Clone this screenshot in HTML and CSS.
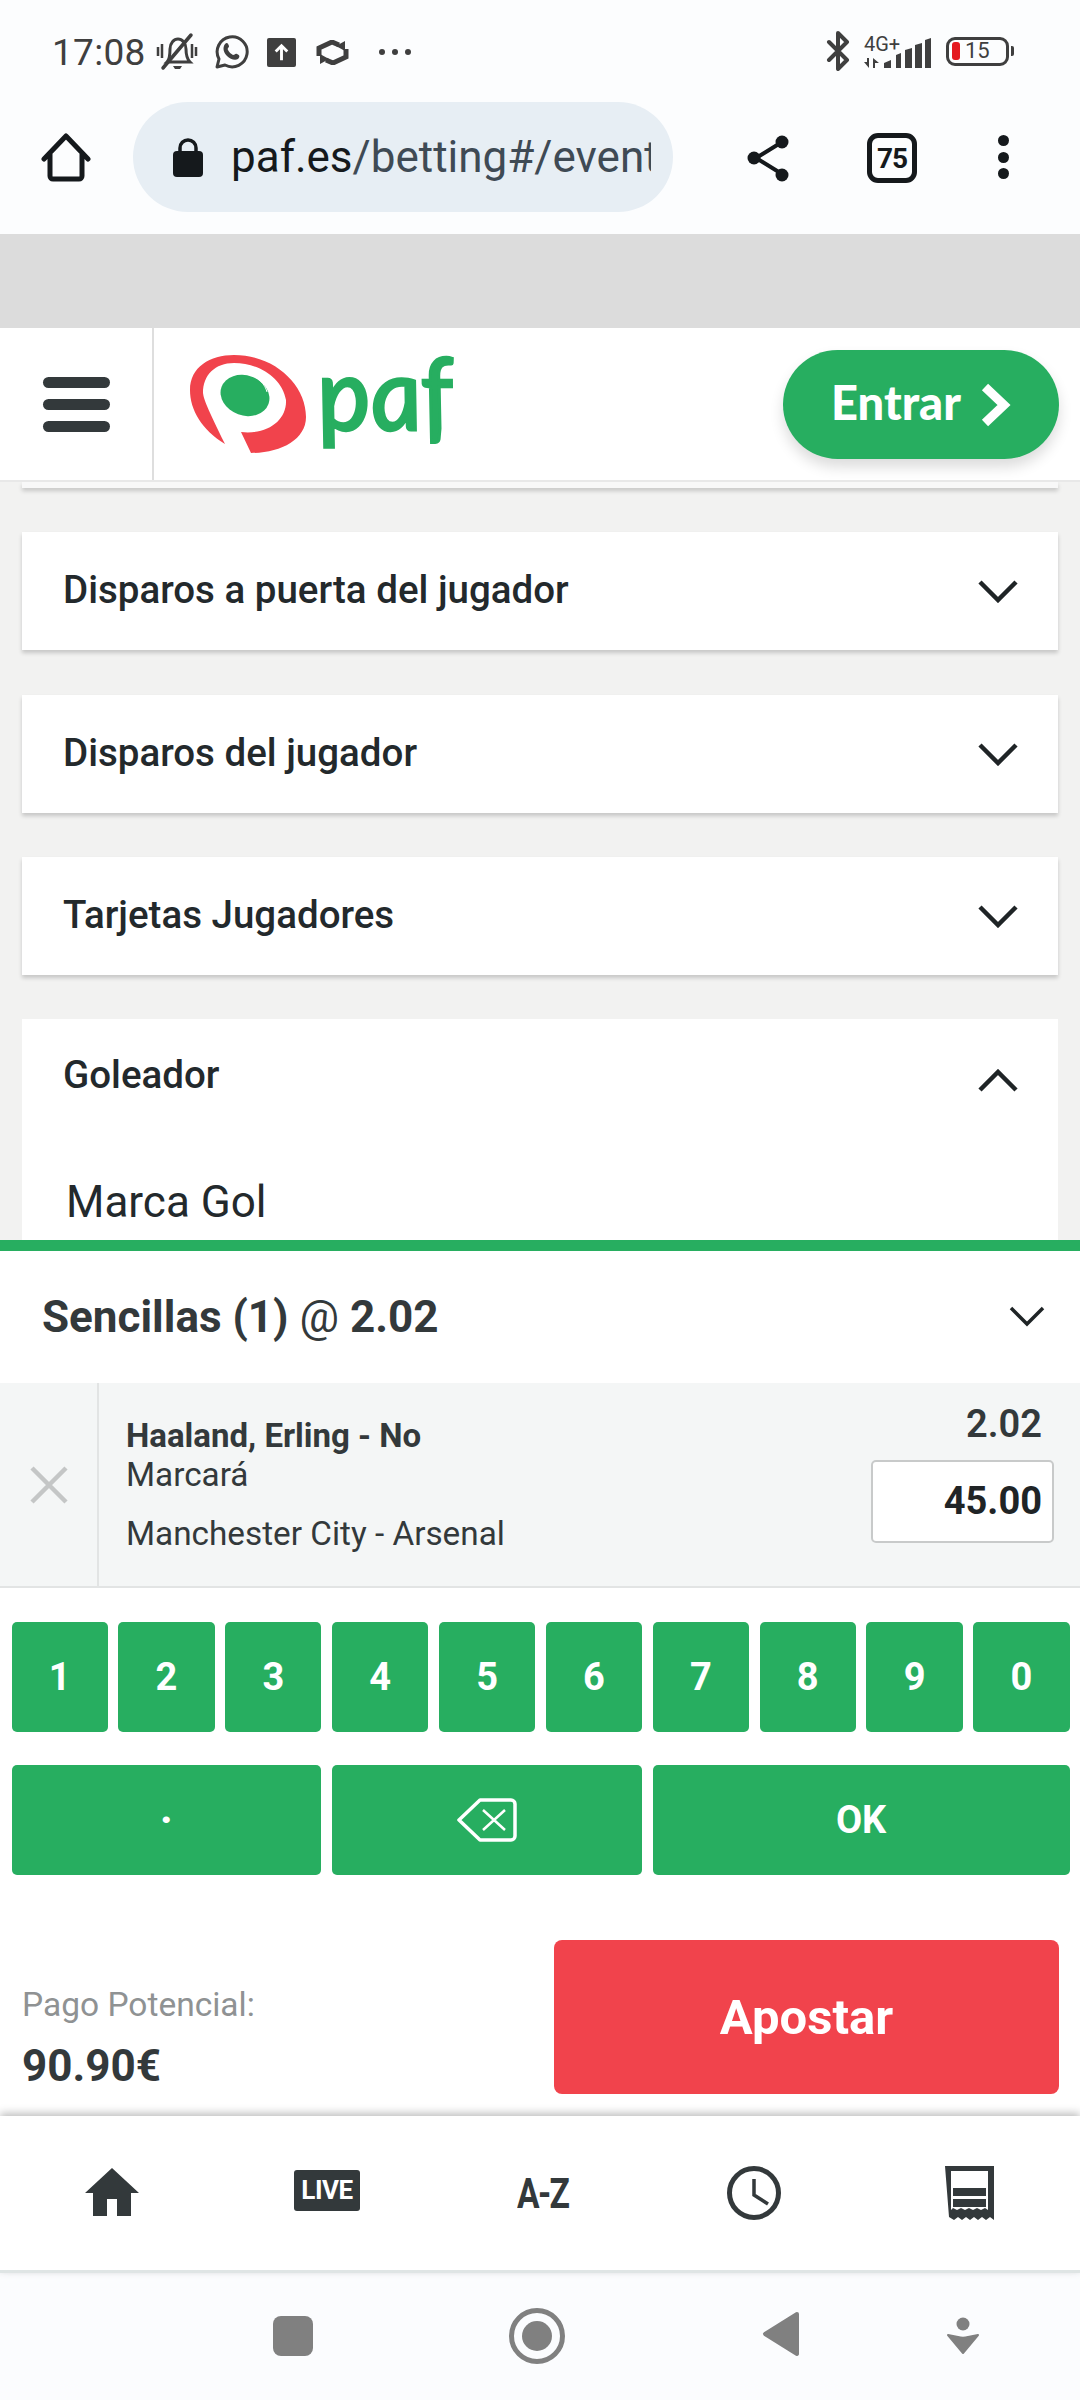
FILE: index.html
```html
<!DOCTYPE html>
<html lang="es">
<head>
<meta charset="utf-8">
<title>paf.es betting</title>
<link rel="stylesheet" href="styles.css">
</head>
<body>
<div class="phone">
  <div class="status">
    <div class="status-left">
      <span class="clock">17:08</span>
      <svg class="si mute" viewBox="0 0 44 40"><g fill="none" stroke="#3f3f3f" stroke-width="3"><path d="M3 15v9M7 12v14M41 15v9M37 12v14" stroke-width="2.500"/><path d="M12 30c3-3 3-8 3-13 0-6 4-10 8-10s8 4 8 10c0 5 1 10 4 13z"/><path d="M8 36 36 3" stroke-linecap="round" stroke-width="3.500"/></g><path d="M18 34h9l-2 3h-5z" fill="#3f3f3f"/></svg>
      <svg class="si wa" viewBox="0 0 36 36"><path d="M4 33l2-8a15 15 0 1 1 6 6z" fill="none" stroke="#3f3f3f" stroke-width="3" stroke-linejoin="round"/><path d="M12 10c2-2 3-1 4 2 0 2-2 2-1 4 1 2 3 4 5 5 2 0 2-2 4-1 3 1 3 3 1 5-3 2-8 0-11-3-3-3-5-8-2-12z" fill="#3f3f3f"/></svg>
      <svg class="si up" viewBox="0 0 30 30"><rect width="30" height="30" rx="2" fill="#3f3f3f"/><path d="M15 23V9M9 14l6-6 6 6" fill="none" stroke="#fff" stroke-width="3"/></svg>
      <svg class="si sync" viewBox="0 0 33 25"><g fill="none" stroke="#3f3f3f" stroke-width="5"><path d="M3 16V8l13-6 7 3"/><path d="M30 9v8l-13 6-7-3"/></g><path d="M4 14l9 5-9 5zM29 11l-9-5 9-5z" fill="#3f3f3f"/></svg>
      <span class="dots"><i></i><i></i><i></i></span>
    </div>
    <div class="status-right">
      <svg class="si bt" viewBox="0 0 25 40"><path d="M3 11l18 18-9 9V2l9 9L3 29" fill="none" stroke="#3f3f3f" stroke-width="4" stroke-linejoin="round" stroke-linecap="round"/></svg>
      <div class="signal">
        <div class="sig-text">
          <span class="net">4G+</span>
          <svg class="arrows" viewBox="0 0 16 10"><path d="M0 4h3V0h2v10zM9 0l6 5h-4v5H9z" fill="#3f3f3f"/></svg>
        </div>
        <svg class="bars" viewBox="0 0 47 30"><path d="M0 30v-5l7-3v8zM12 30V17l5-2v15zM21 30V12l7-2v20zM31 30V7l7-2v25zM41 30V2l6-2v30z" fill="#3f3f3f"/></svg>
      </div>
      <div class="battery"><i class="level"></i><span>15</span></div><i class="battery-tip"></i>
    </div>
  </div>

  <div class="toolbar">
    <svg class="tb-home" viewBox="0 0 50 50"><path d="M3 26 25 3l22 23M9 21v22a3 3 0 0 0 3 3h26a3 3 0 0 0 3-3V21" fill="none" stroke="#15191c" stroke-width="5" stroke-linecap="round" stroke-linejoin="round"/></svg>
    <div class="pill">
      <svg class="lock" viewBox="0 0 30 40"><path d="M7 17V11a8 8 0 0 1 16 0v6" fill="none" stroke="#15191c" stroke-width="3.500"/><rect y="14" width="30" height="26" rx="4" fill="#15191c"/></svg>
      <div class="url"><span class="host">paf.es</span>/betting#/event</div>
    </div>
    <svg class="tb-share" viewBox="0 0 44 48"><path d="M35 8 9 24l26 16" fill="none" stroke="#15191c" stroke-width="4"/><circle cx="35" cy="8" r="6.500" fill="#15191c"/><circle cx="7" cy="24" r="6.500" fill="#15191c"/><circle cx="35" cy="41" r="6.500" fill="#15191c"/></svg>
    <div class="tabs">75</div>
    <div class="menu"><i></i><i></i><i></i></div>
  </div>

  <div class="band"></div>

  <header class="site-head">
    <div class="burger"><i></i><i></i><i></i></div>
    <div class="logo-cell">
      <svg class="logo" viewBox="0 0 265 100">
        <path d="M35 89C12 75 0 55 0 35 0 12 20 0 44 0c41 0 72 30 72 62 0 23-26 36-55 36L51 77c27 3 46-12 45-32C92 22 68 8 44 8 25 8 13 20 13 38c1 7 4 14 22 51z" fill="#f1434c"/>
        <ellipse cx="55" cy="40.500" rx="25" ry="20" transform="rotate(20 55 40.500)" fill="#27ae60"/>
        <path d="M60 20c8 2 15 9 17 17" fill="none" stroke="#fff" stroke-width="1"/>
        <text class="logo-text" x="131" y="75" transform="skewX(8) translate(-10 0)">paf</text>
      </svg>
    </div>
    <button class="enter"><span class="enter-label">Entrar</span>
      <svg class="enter-arrow" viewBox="0 0 30 44"><path d="M4 4l19 18L4 40" fill="none" stroke="#fff" stroke-width="9"/></svg>
    </button>
  </header>

  <main class="content">
    <div class="card-tail"></div>
    <section class="card">
      <h3>Disparos a puerta del jugador</h3>
      <svg class="chev" viewBox="0 0 40 24"><path d="M2 3l18 18L38 3" fill="none" stroke="#1f2426" stroke-width="4.500"/></svg>
    </section>
    <section class="card">
      <h3>Disparos del jugador</h3>
      <svg class="chev" viewBox="0 0 40 24"><path d="M2 3l18 18L38 3" fill="none" stroke="#1f2426" stroke-width="4.500"/></svg>
    </section>
    <section class="card">
      <h3>Tarjetas Jugadores</h3>
      <svg class="chev" viewBox="0 0 40 24"><path d="M2 3l18 18L38 3" fill="none" stroke="#1f2426" stroke-width="4.500"/></svg>
    </section>
    <section class="card open">
      <div class="card-row">
        <h3>Goleador</h3>
        <svg class="chev up-chev" viewBox="0 0 40 24"><path d="M2 21 20 3l18 18" fill="none" stroke="#1f2426" stroke-width="4.500"/></svg>
      </div>
      <p class="market">Marca Gol</p>
    </section>
  </main>

  <section class="slip">
    <div class="slip-head">
      <h2>Sencillas (1) <span class="at">@</span> 2.02</h2>
      <svg class="slip-chev" viewBox="0 0 36 22"><path d="M2 3l16 16L34 3" fill="none" stroke="#1f2426" stroke-width="3.500"/></svg>
    </div>
    <div class="bet">
      <div class="bet-x"><svg viewBox="0 0 38 38"><path d="M2 2l34 34M36 2 2 36" stroke="#c4c6c6" stroke-width="4.500"/></svg></div>
      <div class="bet-info">
        <div class="bet-name">Haaland, Erling - No</div>
        <div class="bet-market">Marcará</div>
        <div class="bet-event">Manchester City - Arsenal</div>
      </div>
      <div class="bet-side">
        <div class="odd">2.02</div>
        <div class="stake">45.00</div>
      </div>
    </div>
    <div class="keypad">
      <button class="key">1</button><button class="key">2</button><button class="key">3</button><button class="key">4</button><button class="key">5</button><button class="key">6</button><button class="key">7</button><button class="key">8</button><button class="key">9</button><button class="key">0</button>
      <button class="key s3 dot-key">.</button>
      <button class="key s3"><svg class="bksp" viewBox="0 0 60 44"><path d="M23 2h31a4 4 0 0 1 4 4v32a4 4 0 0 1-4 4H23L2 22z" fill="none" stroke="#fff" stroke-width="3.500" stroke-linejoin="round"/><path d="M26 12l22 20M48 12 26 32" stroke="#fff" stroke-width="2.500"/></svg></button>
      <button class="key s4">OK</button>
    </div>
    <div class="pay">
      <div class="pay-info">
        <div class="pay-label">Pago Potencial:</div>
        <div class="pay-value">90.90€</div>
      </div>
      <button class="place">Apostar</button>
    </div>
  </section>

  <nav class="tabbar">
    <svg class="n-home" viewBox="0 0 54 48"><path d="M27 0l27 25h-8v23H32V31H22v17H8V25H0z" fill="#33393b"/></svg>
    <div class="n-live">LIVE</div>
    <div class="n-az">A-Z</div>
    <svg class="n-clock" viewBox="0 0 54 54"><circle cx="27" cy="27" r="24.500" fill="none" stroke="#33393b" stroke-width="5"/><path d="M27 13v16l14 9" fill="none" stroke="#33393b" stroke-width="3.500"/></svg>
    <svg class="n-rcpt" viewBox="0 0 49 54"><path d="M0 0h49v54l-4-3-4 3-4-3-4 3-4-3-4 3-4-3-4 3-4-3-4 3-5-3z" fill="#33393b"/><path d="M6 5h37v39l-3-2-4 2-4-2-4 2-4-2-4 2-4-2-4 2-4-2-2 2z" fill="#fff"/><path d="M8 22h33v8H8zM8 33h33v8H8z" fill="#33393b"/></svg>
  </nav>

  <div class="android">
    <i class="a-square"></i>
    <svg class="a-home" viewBox="0 0 56 56"><circle cx="28" cy="28" r="25.500" fill="none" stroke="#808080" stroke-width="5"/><circle cx="28" cy="28" r="15" fill="#808080"/></svg>
    <svg class="a-back" viewBox="0 0 38 46"><path d="M35 3 3 23l32 20z" fill="#808080" stroke="#808080" stroke-width="4" stroke-linejoin="round"/></svg>
    <svg class="a-assist" viewBox="0 0 34 38"><circle cx="17" cy="7" r="6.500" fill="#808080"/><path d="M2 18l10 2c3 1 7 1 10 0l10-2-15 18z" fill="#808080" stroke="#808080" stroke-width="2" stroke-linejoin="round"/></svg>
  </div>
</div>
</body>
</html>
```

FILE: styles.css
```css
* { box-sizing: border-box; }
html, body { margin: 0; padding: 0; }
body { font-family: Roboto, "Liberation Sans", sans-serif; background: #fff; }
button { font-family: inherit; border: 0; padding: 0; margin: 0; }
h2, h3, p { margin: 0; }
i { display: block; }
svg { display: block; flex: none; }

.phone { width: 1080px; height: 2400px; overflow: hidden; display: flex; flex-direction: column; background: #fcfdfe; }

/* status bar */
.status { height: 102px; display: flex; justify-content: space-between; align-items: center; padding: 0 66px 0 52px; flex: none; }
.status-left, .status-right { display: flex; align-items: center; }
.status-left { padding-top: 2px; }
.clock { font-size: 37px; color: #3f3f3f; letter-spacing: .3px; }
.si.mute { width: 44px; height: 40px; margin-left: 9px; }
.si.wa { width: 36px; height: 36px; margin-left: 14px; }
.si.up { width: 29px; height: 29px; margin-left: 18px; }
.si.sync { width: 33px; height: 25px; margin-left: 20px; }
.dots { display: flex; gap: 7px; margin-left: 30px; }
.dots i { width: 6px; height: 6px; border-radius: 50%; background: #3f3f3f; }
.si.bt { width: 25px; height: 40px; }
.signal { display: flex; align-items: flex-end; margin-left: 13px; }
.sig-text { display: flex; flex-direction: column; width: 38px; }
.net { font-size: 20px; line-height: 18px; color: #3f3f3f; white-space: nowrap; }
.arrows { width: 16px; height: 10px; margin-top: 5px; }
.bars { width: 47px; height: 30px; margin-left: -18px; }
.battery { width: 63px; height: 29px; margin-left: 15px; border: 3px solid #3f3f3f; border-radius: 9px; display: flex; align-items: center; padding-left: 3px; gap: 5px; }
.battery .level { width: 8px; height: 18px; border-radius: 3px; background: #e4191f; }
.battery span { font-size: 22px; color: #3f3f3f; line-height: 1; }
.battery-tip { width: 3px; height: 10px; background: #3f3f3f; margin-left: 2px; border-radius: 0 2px 2px 0; }

/* browser toolbar */
.toolbar { height: 132px; display: flex; align-items: flex-start; position: relative; flex: none; }
.tb-home { width: 50px; height: 50px; margin: 31px 0 0 41px; }
.pill { width: 540px; height: 110px; margin: 0 0 0 42px; border-radius: 55px; background: #e7eef4; display: flex; align-items: center; padding: 0 21px 0 40px; }
.lock { width: 30px; height: 40px; }
.url { margin-left: 28px; font-size: 44px; line-height: 56px; color: #3f4a54; white-space: nowrap; overflow: hidden; width: 420px; }
.host { color: #15191c; }
.tb-share { width: 44px; height: 48px; margin: 32px 0 0 74px; }
.tabs { width: 50px; height: 50px; margin: 31px 0 0 76px; border: 5px solid #15191c; border-radius: 11px; font-size: 28px; font-weight: 700; color: #15191c; display: flex; align-items: center; justify-content: center; letter-spacing: -1px; }
.menu { margin: 33px 0 0 81px; display: flex; flex-direction: column; gap: 5.5px; }
.menu i { width: 11px; height: 11px; border-radius: 50%; background: #15191c; }

.band { height: 94px; background: #dcdcdc; flex: none; }

/* site header */
.site-head { height: 154px; display: flex; background: #fff; flex: none; position: relative; z-index: 2; border-bottom: 2px solid #e8e8e8; }
.burger { width: 154px; padding: 49px 0 0 43px; display: flex; flex-direction: column; gap: 11px; border-right: 2px solid #dedede; }
.burger i { width: 67px; height: 11px; border-radius: 6px; background: #33393b; }
.logo-cell { padding: 27px 0 0 36px; flex: 1; }
.logo { width: 265px; height: 100px; overflow: visible; }
.logo-text { font-family: Lato, sans-serif; font-style: italic; font-size: 100px; fill: #27ae60; stroke: #27ae60; stroke-width: 3px; }
.enter { align-self: flex-start; width: 276px; height: 109px; margin: 22px 21px 0 0; border-radius: 55px; background: #27ae60; color: #fff; font-size: 47px; font-weight: 900; box-shadow: 0 8px 14px rgba(0,0,0,.14); display: flex; align-items: center; justify-content: center; gap: 20px; font-family: Lato, sans-serif; }
.enter-label { padding-bottom: 5px; }
.enter-arrow { width: 30px; height: 44px; }

/* markets */
.content { height: 758px; background: #f2f2f1; padding: 0 22px; overflow: hidden; flex: none; display: flex; flex-direction: column; gap: 44.3px; }
.card-tail { height: 6px; background: #f8f8f8; box-shadow: 0 3px 4px rgba(0,0,0,.18); flex: none; }
.card { height: 118px; background: #fff; box-shadow: 0 3px 4px rgba(0,0,0,.18); display: flex; align-items: center; justify-content: space-between; padding: 0 40px 0 41px; flex: none; }
.card h3 { font-size: 38.5px; font-weight: 500; color: #23292c; padding-bottom: 3px; }
.chev { width: 40px; height: 24px; }
.card.open { display: block; padding: 0; height: 221px; box-shadow: none; }
.card-row { height: 114px; display: flex; align-items: center; justify-content: space-between; padding: 0 40px 0 41px; }
.up-chev { margin-top: 10px; }
.market { font-size: 44px; color: #23292c; padding: 43px 0 0 44px; }

/* bet slip */
.slip { flex: none; background: #fff; border-top: 11px solid #27ae60; height: 876px; display: flex; flex-direction: column; position: relative; z-index: 1; }
.slip-head { height: 132px; display: flex; align-items: center; justify-content: space-between; padding: 0 35px 0 42px; flex: none; }
.slip-head h2 { font-size: 44px; font-weight: 700; color: #33393b; }
.at { font-weight: 400; }
.slip-chev { width: 36px; height: 22px; margin-bottom: 2px; }
.bet { height: 205px; background: #f4f6f6; border-bottom: 2px solid #e2e4e4; display: flex; flex: none; }
.bet-x { width: 99px; border-right: 2px solid #e2e4e4; display: flex; align-items: center; justify-content: center; }
.bet-x svg { width: 38px; height: 38px; }
.bet-info { padding: 33px 0 0 27px; flex: 1; color: #33393b; font-size: 33.3px; line-height: 39px; }
.bet-name { font-weight: 700; font-size: 33px; }
.bet-event { margin-top: 20px; }
.bet-side { width: 183px; margin-right: 26px; padding-top: 19px; text-align: right; }
.odd { font-size: 38px; font-weight: 600; color: #33393b; line-height: 44px; padding-right: 12px; }
.stake { height: 83px; margin-top: 14px; background: #fff; border: 2px solid #c8caca; border-radius: 5px; font-size: 38px; font-weight: 700; color: #202426; line-height: 78px; padding-right: 10px; }
.keypad { display: grid; grid-template-columns: repeat(10, 1fr); gap: 33px 10.7px; padding: 34px 10.5px 0 11.5px; flex: none; }
.key { height: 110px; background: #27ae60; color: #fff; font-size: 38px; font-weight: 700; border-radius: 5px; display: flex; align-items: center; justify-content: center; }
.dot-key { padding-bottom: 24px; font-size: 44px; }
.s3 { grid-column: span 3; }
.s4 { grid-column: span 4; }
.bksp { width: 60px; height: 44px; }
.pay { display: flex; justify-content: space-between; padding: 65px 21px 0 22px; flex: none; }
.pay-label { font-size: 33.5px; color: #8f9293; margin-top: 45px; line-height: 40px; }
.pay-value { font-size: 44px; font-weight: 700; color: #33393b; margin-top: 15px; line-height: 52px; }
.place { width: 505px; height: 154px; background: #f1434c; color: #fff; font-size: 49px; font-weight: 700; border-radius: 8px; }

/* bottom nav */
.tabbar { height: 157px; background: #fff; border-bottom: 3px solid #dfe5e5; box-shadow: 0 -3px 8px rgba(0,0,0,.25); position: relative; z-index: 2; display: flex; align-items: flex-start; flex: none; }
.n-home { width: 54px; height: 48px; margin: 52px 0 0 85px; }
.n-live { width: 66px; height: 41px; margin: 54px 0 0 155px; background: #33393b; border-radius: 3px; color: #fff; font-size: 26px; font-weight: 700; text-align: center; line-height: 41px; letter-spacing: -.5px; }
.n-az { margin: 54px 0 0 157px; font-size: 42px; line-height: 48px; font-weight: 700; color: #33393b; letter-spacing: -2px; width: 66px; transform: scaleX(.8); transform-origin: left center; }
.n-clock { width: 54px; height: 54px; margin: 50px 0 0 144px; }
.n-rcpt { width: 49px; height: 54px; margin: 50px 0 0 164px; }

.android { flex: 1; background: #fbfcfe; display: flex; align-items: flex-start; }
.a-square { width: 40px; height: 40px; border-radius: 8px; background: #808080; margin: 43px 0 0 273px; }
.a-home { width: 56px; height: 56px; margin: 35px 0 0 196px; }
.a-back { width: 38px; height: 46px; margin: 38px 0 0 197px; }
.a-assist { width: 34px; height: 38px; margin: 44px 0 0 146px; }
```
